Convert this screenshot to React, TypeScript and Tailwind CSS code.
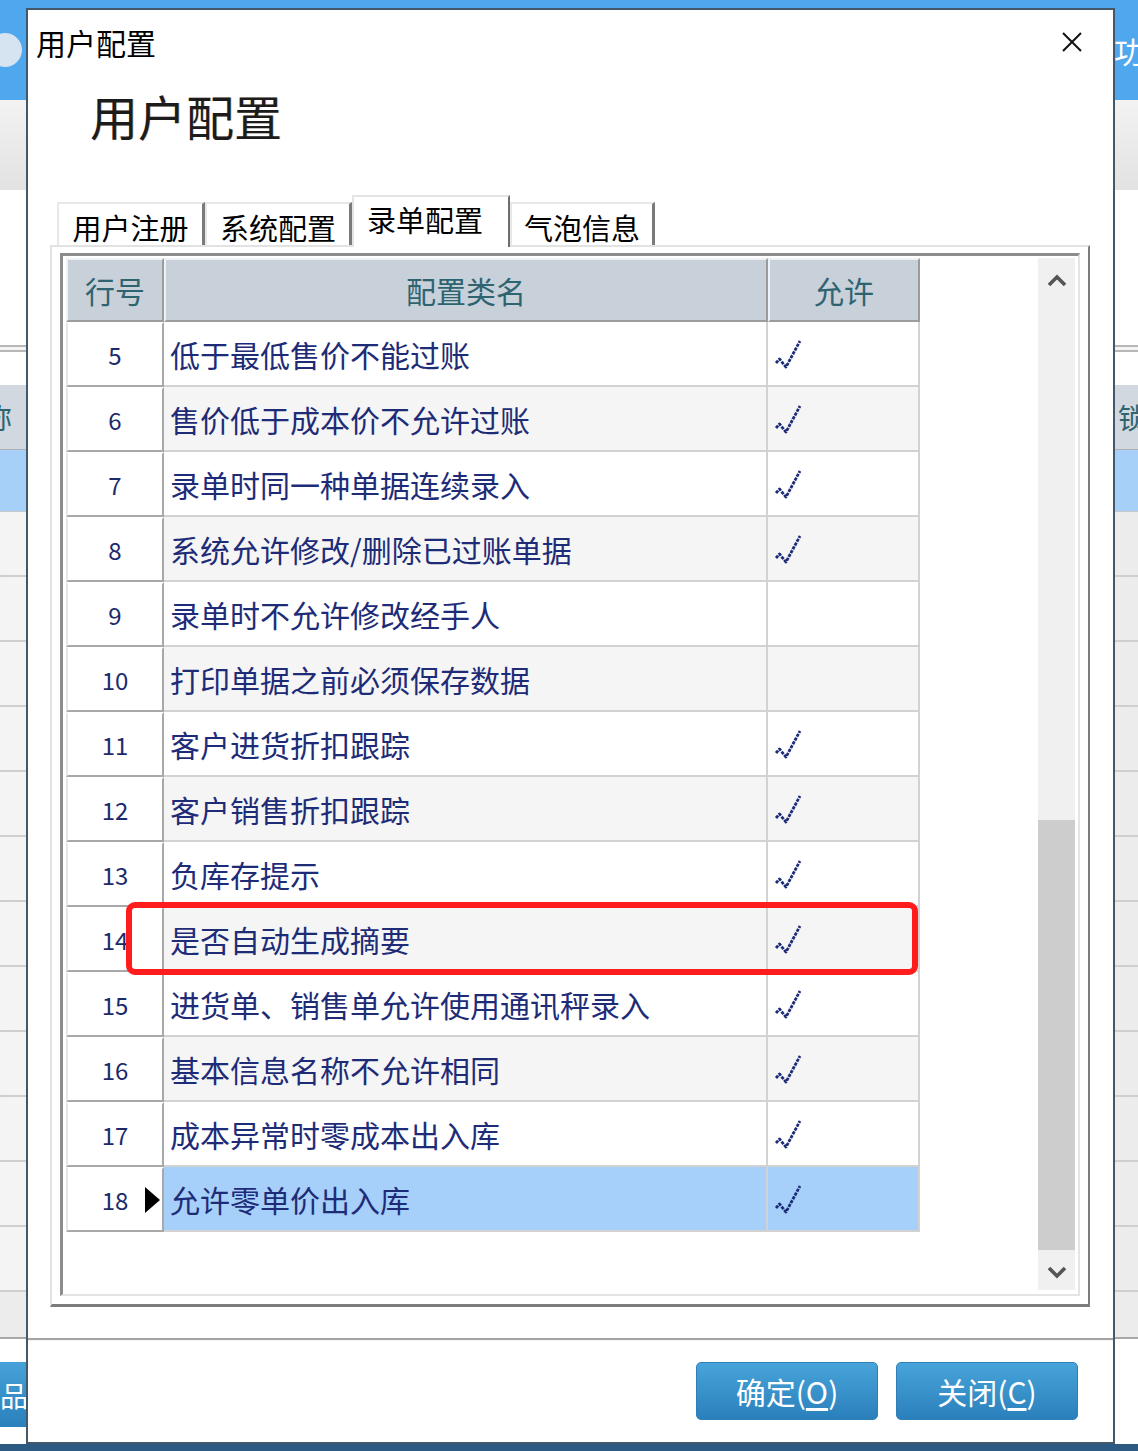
import React from 'react';

type Row = { no: number; name: string; ok: boolean };

const rows: Row[] = [
  { no: 5, name: '低于最低售价不能过账', ok: true },
  { no: 6, name: '售价低于成本价不允许过账', ok: true },
  { no: 7, name: '录单时同一种单据连续录入', ok: true },
  { no: 8, name: '系统允许修改/删除已过账单据', ok: true },
  { no: 9, name: '录单时不允许修改经手人', ok: false },
  { no: 10, name: '打印单据之前必须保存数据', ok: false },
  { no: 11, name: '客户进货折扣跟踪', ok: true },
  { no: 12, name: '客户销售折扣跟踪', ok: true },
  { no: 13, name: '负库存提示', ok: true },
  { no: 14, name: '是否自动生成摘要', ok: true },
  { no: 15, name: '进货单、销售单允许使用通讯秤录入', ok: true },
  { no: 16, name: '基本信息名称不允许相同', ok: true },
  { no: 17, name: '成本异常时零成本出入库', ok: true },
  { no: 18, name: '允许零单价出入库', ok: true },
];

const tabs = [
  { label: '用户注册', w: 'w-[148px]' },
  { label: '系统配置', w: 'w-[147px]' },
  { label: '录单配置', w: 'w-[158px]', active: true },
  { label: '气泡信息', w: 'w-[145px]' },
];

function Check() {
  return (
    <svg width="28" height="30" viewBox="0 0 28 30" fill="none">
      <polyline
        points="2,24 5.5,20 12,28 26,2"
        stroke="#1d2c78"
        strokeWidth="2.8"
        strokeDasharray="3.2 1.1"
        strokeLinejoin="round"
      />
    </svg>
  );
}

function Chevron({ down }: { down?: boolean }) {
  return (
    <svg width="20" height="14" viewBox="0 0 20 14" fill="none">
      <polyline
        points={down ? '2,3 10,11 18,3' : '2,11 10,3 18,11'}
        stroke="#555"
        strokeWidth="3.6"
        strokeLinejoin="miter"
      />
    </svg>
  );
}

// the app window that sits behind the modal
function BackgroundApp() {
  return (
    <div className="flex flex-col w-full h-full">
      <div className="h-[100px] bg-[#4fa7ee] flex items-center justify-between">
        <div className="w-[34px] h-[34px] -ml-[12px] rounded-full bg-[#d6e4f2]" />
        <div className="text-white text-[30px] whitespace-nowrap -mr-[36px]">功能</div>
      </div>
      <div className="h-[90px] bg-gradient-to-b from-[#f3f3f3] to-[#e2e2e2]" />
      <div className="h-[155px] bg-white" />
      <div className="h-[7px] border-y-2 border-[#b8b8b8] bg-[#f4f4f4]" />
      <div className="h-[33px] bg-white" />
      <div className="h-[65px] bg-[#d2d8df] flex items-center justify-between text-[28px] text-[#2e6470] border-b border-[#b0b0b0]">
        <span className="-ml-[16px]">称</span>
        <span className="-mr-[36px]">锁定</span>
      </div>
      <div className="h-[62px] bg-[#a7d0f9] border-b border-[#c8c8c8]" />
      {Array.from({ length: 12 }).map((_, i) => (
        <div
          key={i}
          className="h-[65px] bg-gradient-to-r from-[#f4f4f4] via-white to-[#ececec] border-b-2 border-[#cfcfcf]"
        />
      ))}
      <div className="h-[47px] bg-[#ececec] border-b-2 border-[#a8a8a8]" />
      <div className="h-[23px] bg-white" />
      <div className="h-[65px] flex">
        <div className="w-[150px] bg-gradient-to-b from-[#45a2d8] to-[#2a80bb] text-white text-[28px] flex items-center">
          品
        </div>
      </div>
      <div className="flex-1 bg-white" />
      <div className="h-[7px] bg-[#2d5a83]" />
    </div>
  );
}

export default function App() {
  return (
    <div className="relative w-[1138px] h-[1451px] overflow-hidden bg-white font-['Noto_Sans_CJK_SC','Noto_Sans',sans-serif]">
      <BackgroundApp />

      {/* modal */}
      <div className="absolute left-[26px] top-[8px] w-[1089px] h-[1436px] bg-white border-2 border-[#44586c] flex flex-col">
        <div className="h-[61px] shrink-0 flex items-center justify-between pl-[8px] pr-[31px] pt-[3px]">
          <span className="text-[30px] leading-none text-black">用户配置</span>
          <svg width="20" height="20" viewBox="0 0 20 20">
            <path d="M1 1 L19 19 M19 1 L1 19" stroke="#111" strokeWidth="2" />
          </svg>
        </div>

        <div className="h-[124px] shrink-0 pl-[62px] pt-[20px]">
          <span className="text-[48px] leading-none text-[#1c1c1c] [text-shadow:1px_0_0_rgba(200,120,40,0.35)]">
            用户配置
          </span>
        </div>

        {/* tabs */}
        <div className="h-[50px] shrink-0 flex items-end pl-[29px]">
          {tabs.map((t) =>
            t.active ? (
              <div
                key={t.label}
                className={`${t.w} h-[52px] -mb-[2px] relative z-10 bg-white border-t-2 border-l-2 border-r-2 border-t-[#e4e4e4] border-l-[#e4e4e4] border-r-[#6e6e6e] flex items-start justify-center pr-[12px] pt-[5px] text-[29px] leading-none text-black`}
              >
                <span className="mt-[3px]">{t.label}</span>
              </div>
            ) : (
              <div
                key={t.label}
                className={`${t.w} h-[43px] bg-white border-t-2 border-l-2 border-r-[3px] border-t-[#e8e8e8] border-l-[#e8e8e8] border-r-[#7a7a7a] flex items-center justify-center pt-[6px] text-[29px] leading-none text-black`}
              >
                {t.label}
              </div>
            )
          )}
        </div>

        {/* tab panel */}
        <div className="ml-[22px] w-[1040px] h-[1062px] shrink-0 border-2 border-t-[#e2e2e2] border-l-[#e2e2e2] border-r-[#7c7c7c] border-b-[3px] border-b-[#7c7c7c] pt-[6px] px-[8px] pb-[8px]">
          <div className="w-full h-full border-t-[3px] border-l-[3px] border-r-2 border-b-2 border-t-[#8c8c8c] border-l-[#8c8c8c] border-r-[#e4e4e4] border-b-[#e4e4e4] pt-[2px] pl-[3px] pr-[3px] pb-[4px] flex bg-white">
            {/* grid */}
            <div className="relative w-[854px] flex flex-col">
              <div className="h-[64px] flex text-[30px] leading-none text-[#2e6470]">
                <div className="w-[98px] bg-[#c8d0da] border-2 border-t-[#eef1f5] border-l-[#eef1f5] border-r-[#9c9c9c] border-b-[#9c9c9c] flex items-center justify-center">
                  行号
                </div>
                <div className="w-[604px] bg-[#c8d0da] border-2 border-t-[#eef1f5] border-l-[#eef1f5] border-r-[#9c9c9c] border-b-[#9c9c9c] flex items-center justify-center">
                  配置类名
                </div>
                <div className="w-[152px] bg-[#c8d0da] border-2 border-t-[#eef1f5] border-l-[#eef1f5] border-r-[#9c9c9c] border-b-[#9c9c9c] flex items-center justify-center">
                  允许
                </div>
              </div>

              {rows.map((r) => {
                const selected = r.no === 18;
                const bg = selected ? 'bg-[#a6cffa]' : r.no % 2 === 0 ? 'bg-[#f5f5f5]' : 'bg-white';
                return (
                  <div key={r.no} className="h-[65px] flex">
                    <div className="relative w-[98px] bg-white border-2 border-t-white border-l-[#e6e6e6] border-r-[#a8a8a8] border-b-[#a8a8a8] flex items-center justify-center text-[24px] leading-none text-[#1c2a6c]">
                      {r.no}
                      {selected && (
                        <span className="absolute right-[2px] top-1/2 -translate-y-1/2 w-0 h-0 border-y-[13px] border-y-transparent border-l-[15px] border-l-black" />
                      )}
                    </div>
                    <div className={`w-[604px] ${bg} border-r-2 border-b-2 border-[#d2d2d2] flex items-center pl-[6px] text-[30px] leading-none text-[#1e2c78] whitespace-nowrap`}>
                      {r.name}
                    </div>
                    <div className={`w-[152px] ${bg} border-r-2 border-b-2 border-[#d2d2d2] flex items-center pl-[6px]`}>
                      {r.ok && <Check />}
                    </div>
                  </div>
                );
              })}

              {/* highlight drawn over row 14 */}
              <div className="absolute left-[60px] top-[644px] w-[792px] h-[73px] border-[6px] border-[#ff1c1c] rounded-[9px] pointer-events-none" />
            </div>

            <div className="flex-1 bg-white" />

            {/* scrollbar */}
            <div className="w-[37px] bg-[#f0f0f0] flex flex-col">
              <div className="h-[46px] flex items-center justify-center">
                <Chevron />
              </div>
              <div className="h-[516px]" />
              <div className="h-[430px] bg-[#cdcdcd]" />
              <div className="h-[4px]" />
              <div className="h-[36px] flex items-center justify-center">
                <Chevron down />
              </div>
            </div>
          </div>
        </div>

        {/* footer */}
        <div className="mt-[31px] h-[3px] shrink-0 border-t-2 border-[#a4a4a4] bg-[#f2f2f2]" />
        <div className="mt-[21px] flex justify-end gap-[18px] pr-[35px]">
          <button className="w-[182px] h-[58px] rounded-[5px] bg-gradient-to-b from-[#48a4da] to-[#2a80bb] border border-[#2f7fb4] text-white text-[30px] leading-none flex items-center justify-center">
            确定(<span className="underline underline-offset-4">O</span>)
          </button>
          <button className="w-[182px] h-[58px] rounded-[5px] bg-gradient-to-b from-[#48a4da] to-[#2a80bb] border border-[#2f7fb4] text-white text-[30px] leading-none flex items-center justify-center">
            关闭(<span className="underline underline-offset-4">C</span>)
          </button>
        </div>
      </div>
    </div>
  );
}
